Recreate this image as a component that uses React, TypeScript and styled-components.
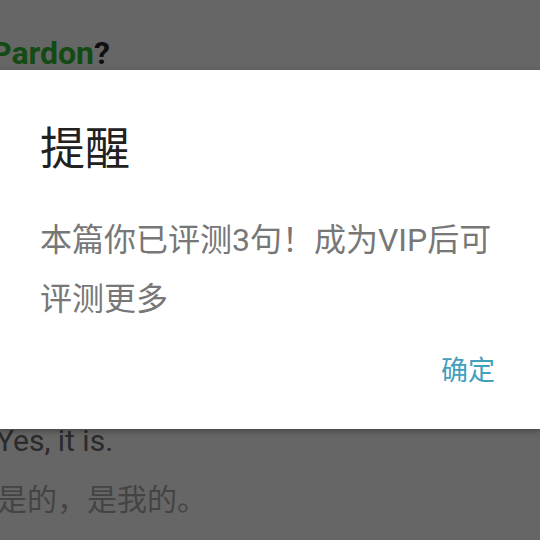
import React, { FC } from 'react';
import styled, { createGlobalStyle } from 'styled-components';

const Global = createGlobalStyle`
  html, body {
    margin: 0;
    padding: 0;
    background: #ffffff;
  }
  body {
    font-family: Roboto, "Noto Sans CJK SC", sans-serif;
  }
`;

const Screen = styled.div`
  position: relative;
  width: 540px;
  height: 540px;
  overflow: hidden;
  background: #ffffff;
`;

const Page = styled.div`
  display: flex;
  flex-direction: column;
  padding-top: 33px;
`;

const Heading = styled.h1`
  margin: 0 0 0 -9px;
  font-size: 32px;
  line-height: 40px;
  font-weight: 700;
  color: #32bc32;
`;

const Mark = styled.span`
  color: #2a2a2a;
`;

const English = styled.p`
  margin: 348px 0 0 -4px;
  font-size: 30px;
  line-height: 40px;
  color: #6c6c6c;
`;

const Chinese = styled.p`
  margin: 16px 0 0 -3px;
  font-size: 30px;
  line-height: 46px;
  color: #aaaaaa;
`;

const Overlay = styled.div`
  position: absolute;
  inset: 0;
  background: rgba(0, 0, 0, 0.6);
`;

const Dialog = styled.div`
  position: absolute;
  left: 0;
  right: 0;
  top: 70px;
  height: 359px;
  box-sizing: border-box;
  display: flex;
  flex-direction: column;
  padding: 54px 45px 0 40px;
  background: #ffffff;
  box-shadow: 0 2px 6px rgba(0, 0, 0, 0.35);
`;

const Title = styled.h2`
  margin: 0;
  font-size: 45px;
  line-height: 52px;
  font-weight: 400;
  color: #212121;
`;

const Message = styled.p`
  margin: 35px 0 0;
  font-size: 32px;
  line-height: 59px;
  color: #777777;
`;

const Actions = styled.div`
  display: flex;
  justify-content: flex-end;
  margin-top: 22px;
`;

const Button = styled.button`
  border: none;
  background: none;
  padding: 0;
  font-family: inherit;
  font-size: 27px;
  line-height: 40px;
  color: #43a0bc;
`;

const App: FC = () => {
  return (
    <>
      <Global />
      <Screen>
        <Page>
          <Heading>
            Pardon<Mark>?</Mark>
          </Heading>
          <English>Yes, it is.</English>
          <Chinese>是的，是我的。</Chinese>
        </Page>
        <Overlay />
        <Dialog>
          <Title>提醒</Title>
          <Message>本篇你已评测3句！成为VIP后可评测更多</Message>
          <Actions>
            <Button>确定</Button>
          </Actions>
        </Dialog>
      </Screen>
    </>
  );
};

export default App;
